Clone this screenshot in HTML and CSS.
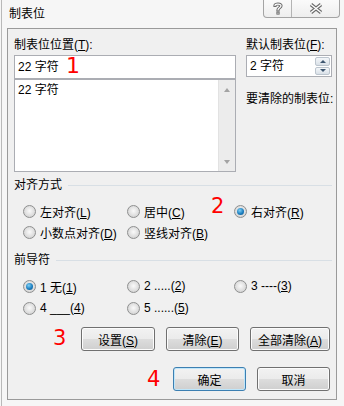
FILE: index.html
```html
<!DOCTYPE html>
<html lang="zh-CN">
<head>
    <meta charset="UTF-8">
    <title>制表位</title>
    <link rel="stylesheet" href="styles.css">
</head>
<body>
    <div class="window">
        <div class="titlebar">
            <span class="title">制表位</span>
        </div>

        <div class="caption-btns">
            <span class="cap-btn help">
                <svg width="10" height="13" viewBox="0 0 10 13">
                    <path d="M2 3.5 C2 1.5 8 1.5 8 3.8 C8 5.8 5 5.8 5 8" fill="none" stroke="#6b6b6b" stroke-width="3.2" stroke-linecap="square"/>
                    <rect x="3.4" y="9.6" width="3.2" height="3" fill="#6b6b6b"/>
                    <path d="M2 3.5 C2 1.5 8 1.5 8 3.8 C8 5.8 5 5.8 5 8" fill="none" stroke="#ffffff" stroke-width="1.2" stroke-linecap="square"/>
                    <rect x="4.4" y="10.6" width="1.2" height="1" fill="#ffffff"/>
                </svg>
            </span>
            <span class="cap-btn close">
                <svg width="14" height="11" viewBox="0 0 14 11">
                    <path d="M2 1.5 L12 9.5 M12 1.5 L2 9.5" fill="none" stroke="#6b6b6b" stroke-width="3.6"/>
                    <path d="M2 1.5 L12 9.5 M12 1.5 L2 9.5" fill="none" stroke="#ffffff" stroke-width="1.4"/>
                </svg>
            </span>
        </div>

        <div class="panel">
            <div class="top">
                <div class="col">
                    <div class="label">制表位位置(<u>T</u>):</div>
                    <div class="textbox">22 字符</div>
                    <div class="listbox">
                        <div class="list-items">
                            <div class="list-item">22 字符</div>
                        </div>
                        <div class="scrollbar">
                            <span class="arrow up"></span>
                            <span class="arrow down"></span>
                        </div>
                    </div>
                </div>
                <div class="col">
                    <div class="label">默认制表位(<u>F</u>):</div>
                    <div class="spinbox">
                        <span class="spin-value">2 字符</span>
                        <div class="spin-btns">
                            <span class="spin-btn"><span class="tri up"></span></span>
                            <span class="spin-btn"><span class="tri down"></span></span>
                        </div>
                    </div>
                    <div class="label clear-label">要清除的制表位:</div>
                </div>
            </div>

            <div class="group-title">对齐方式</div>
            <div class="radio-grid align-grid">
                <label class="radio-item"><span class="radio"></span><span>左对齐(<u>L</u>)</span></label>
                <label class="radio-item"><span class="radio"></span><span>居中(<u>C</u>)</span></label>
                <label class="radio-item"><span class="radio checked"></span><span>右对齐(<u>R</u>)</span></label>
                <label class="radio-item"><span class="radio"></span><span>小数点对齐(<u>D</u>)</span></label>
                <label class="radio-item"><span class="radio"></span><span>竖线对齐(<u>B</u>)</span></label>
            </div>

            <div class="group-title leader-title">前导符</div>
            <div class="radio-grid leader-grid">
                <label class="radio-item"><span class="radio checked"></span><span>1 无(<u>1</u>)</span></label>
                <label class="radio-item"><span class="radio"></span><span>2 .....(<u>2</u>)</span></label>
                <label class="radio-item"><span class="radio"></span><span>3 ----(<u>3</u>)</span></label>
                <label class="radio-item"><span class="radio"></span><span>4 ___(<u>4</u>)</span></label>
                <label class="radio-item"><span class="radio"></span><span>5 ......(<u>5</u>)</span></label>
            </div>

            <div class="btn-row">
                <button class="btn w74">设置(<u>S</u>)</button>
                <button class="btn w73">清除(<u>E</u>)</button>
                <button class="btn w80">全部清除(<u>A</u>)</button>
            </div>
            <div class="btn-row bottom-row">
                <button class="btn default w73">确定</button>
                <button class="btn w73">取消</button>
            </div>
        </div>

        <span class="mark mark-1">1</span>
        <span class="mark mark-2">2</span>
        <span class="mark mark-3">3</span>
        <span class="mark mark-4">4</span>
    </div>
</body>
</html>
```

FILE: styles.css
```css
* {
    box-sizing: border-box;
}

body {
    margin: 0;
    background-color: #f6f6f6;
    font-family: "Liberation Sans", "Noto Sans CJK SC", sans-serif;
    font-size: 12px;
    color: #000000;
}

.window {
    position: relative;
    width: 343px;
    height: 406px;
    margin-left: 1px;
    border-left: 1px solid #b9b9b9;
}

.titlebar {
    height: 28px;
    line-height: 28px;
    padding-left: 7px;
}

.caption-btns {
    position: absolute;
    left: 261px;
    top: -1px;
    width: 77px;
    height: 19px;
    display: flex;
    border: 1px solid #a4a4a4;
    border-top: none;
    border-radius: 0 0 4px 4px;
    background: linear-gradient(#fbfbfb, #eeeeee);
}

.cap-btn {
    display: flex;
    align-items: center;
    justify-content: center;
}

.cap-btn.help {
    width: 28px;
    border-right: 1px solid #b4b4b4;
}

.cap-btn.close {
    flex: 1;
}

.panel {
    margin-left: 5px;
    width: 330px;
    height: 372px;
    border: 1px solid #9a9a9a;
    background-color: #f0f0f0;
    padding: 8px 6px 0 6px;
}

.top {
    display: grid;
    grid-template-columns: 222px 86px;
    column-gap: 10px;
}

.label {
    line-height: 16px;
    height: 16px;
    margin-bottom: 2px;
    white-space: nowrap;
}

.textbox {
    height: 24px;
    line-height: 22px;
    border: 1px solid #abadb3;
    background-color: #ffffff;
    padding-left: 3px;
}

.listbox {
    height: 93px;
    display: flex;
    border: 1px solid #abadb3;
    background-color: #ffffff;
}

.list-items {
    flex: 1;
    padding: 2px 3px;
}

.list-item {
    line-height: 16px;
}

.scrollbar {
    width: 17px;
    display: flex;
    flex-direction: column;
    justify-content: space-between;
    align-items: center;
    padding: 8px 0 7px;
    background-color: #ececec;
    border-left: 1px solid #e2e2e2;
}

.arrow {
    width: 0;
    height: 0;
    border-left: 3.5px solid transparent;
    border-right: 3.5px solid transparent;
}

.arrow.up {
    border-bottom: 4px solid #a3a3a3;
}

.arrow.down {
    border-top: 4px solid #a3a3a3;
}

.spinbox {
    height: 22px;
    margin-top: 1px;
    display: flex;
    border: 1px solid #abadb3;
    background-color: #ffffff;
}

.spin-value {
    flex: 1;
    line-height: 20px;
    padding-left: 3px;
}

.spin-btns {
    width: 17px;
    display: flex;
    flex-direction: column;
    gap: 1px;
    padding: 1px;
}

.spin-btn {
    flex: 1;
    display: flex;
    align-items: center;
    justify-content: center;
    border: 1px solid #bcc5ce;
    border-radius: 2px;
    background: linear-gradient(#f4f7fa, #d9e0e7);
}

.tri {
    width: 0;
    height: 0;
    border-left: 3px solid transparent;
    border-right: 3px solid transparent;
}

.tri.up {
    border-bottom: 3px solid #3d5670;
}

.tri.down {
    border-top: 3px solid #3d5670;
}

.clear-label {
    margin-top: 14px;
}

.group-title {
    display: flex;
    align-items: center;
    gap: 6px;
    line-height: 16px;
    margin-top: 5px;
    margin-right: -2px;
}

.group-title::after {
    content: "";
    flex: 1;
    height: 1px;
    background-color: #d8dfe5;
}

.leader-title {
    margin-top: 9px;
}

.radio-grid {
    display: grid;
    grid-template-columns: 104px 107px 1fr;
    padding-left: 9px;
}

.align-grid {
    margin-top: 8px;
    grid-auto-rows: 21px;
}

.leader-grid {
    margin-top: 7px;
    grid-auto-rows: 22px;
}

.radio-item {
    display: flex;
    align-items: center;
    gap: 4px;
    white-space: nowrap;
}

.radio {
    position: relative;
    width: 13px;
    height: 13px;
    border-radius: 50%;
    border: 1px solid #8e8f8f;
    background: radial-gradient(circle at 50% 45%, #fafafa 0%, #e4e4e4 45%, #c9c9c9 100%);
}

.radio.checked::after {
    content: "";
    position: absolute;
    left: 2px;
    top: 2px;
    width: 7px;
    height: 7px;
    border-radius: 50%;
    background: radial-gradient(circle at 40% 35%, #7fd0f5 0%, #1d7fc0 55%, #0b4f84 100%);
}

.btn-row {
    display: flex;
    justify-content: flex-end;
    gap: 11px;
    margin-top: 8px;
}

.bottom-row {
    margin-top: 16px;
}

.btn {
    height: 24px;
    padding: 0;
    font-family: inherit;
    font-size: 12px;
    color: #000000;
    border: 1px solid #707070;
    border-radius: 3px;
    background: linear-gradient(#f2f2f2 0%, #ebebeb 50%, #dddddd 50%, #cfcfcf 100%);
    box-shadow: inset 0 0 0 1px #fcfcfc;
}

.btn.default {
    border-color: #3c7fb1;
    box-shadow: inset 0 0 0 1px #bfe6fa;
}

.w73 {
    width: 73px;
}

.w74 {
    width: 74px;
}

.w80 {
    width: 80px;
}

.mark {
    position: absolute;
    font-family: "DejaVu Sans", sans-serif;
    font-size: 21px;
    line-height: 21px;
    color: #ff0000;
}

.mark-1 {
    left: 64px;
    top: 55px;
    font-size: 22px;
    line-height: 22px;
}

.mark-2 {
    left: 209px;
    top: 196px;
}

.mark-3 {
    left: 51px;
    top: 328px;
}

.mark-4 {
    left: 145px;
    top: 369px;
}
```
